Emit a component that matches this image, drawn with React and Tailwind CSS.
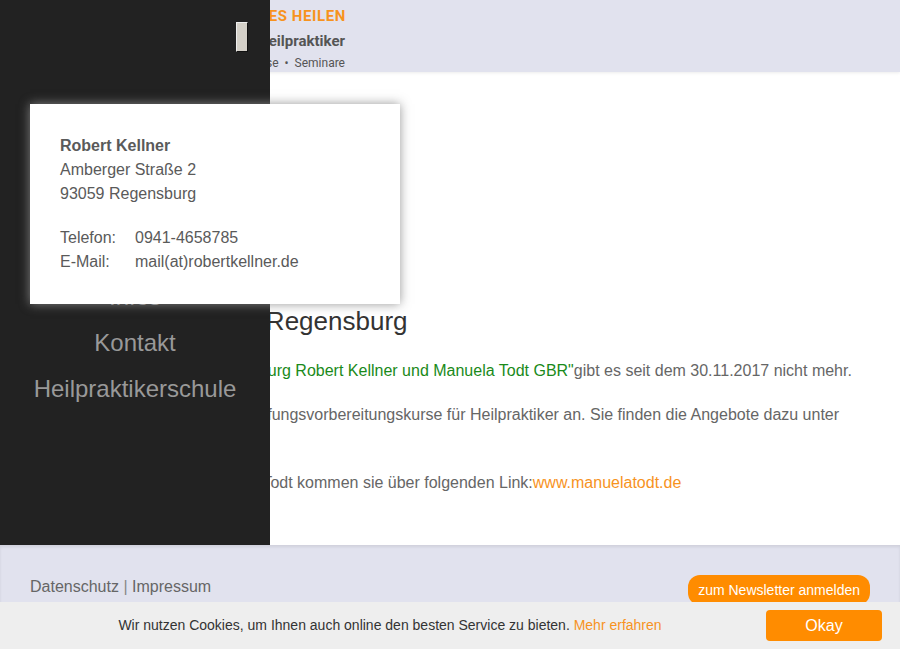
import React from "react";

const menu = [
  "Startseite",
  "Praxis",
  "Therapien",
  "Vorträge & Termine",
  "Infos",
  "Kontakt",
  "Heilpraktikerschule",
];

const App = () => {
  return (
    <div className="relative w-[900px] h-[649px] overflow-hidden bg-white font-['Liberation_Sans',Arial,sans-serif]">
      {/* Header */}
      <header className="h-[72px] bg-[#e1e2ee] shadow-[0_1px_3px_rgba(0,0,0,0.08)] relative z-10">
        <div className="w-[345px] flex flex-col items-end font-['Roboto',sans-serif] pt-[7px]">
          <div className="text-[15px] leading-[18px] font-bold tracking-[0.6px] text-[#f7931e] mr-[-1px]">SANFTES HEILEN</div>
          <div className="text-[15px] leading-[18px] font-bold text-[#555] mt-[7px]">Heilpraktiker</div>
          <div className="text-[12px] leading-[15px] text-[#555] mt-[6px]">Praxis&nbsp; •&nbsp; Kurse&nbsp; •&nbsp; Seminare</div>
        </div>
      </header>

      {/* Main content */}
      <main className="h-[473px] px-[30px] pt-[234px] text-[16px] leading-[24px] text-[#666]">
        <h1 className="text-[26px] leading-[31px] text-[#333] ml-[9px]">Heilpraktikerschule Regensburg</h1>
        <p className="mt-[22px]">
          Die <span className="text-[#1a8a1a]">"Heilpraktikerschule Regensburg Robert Kellner und Manuela Todt GBR"</span>gibt es seit dem 30.11.2017 nicht mehr.
        </p>
        <p className="mt-[20px]">
          Manuela Todt bietet weiterhin Prüfungsvorbereitungskurse für Heilpraktiker an. Sie finden die Angebote dazu unter www.manuelatodt.de
        </p>
        <p className="mt-[20px]">
          Zur Webseite von Frau Manuela Todt kommen sie über folgenden Link:<span className="text-[#f7931e]">www.manuelatodt.de</span>
        </p>
      </main>

      {/* Footer */}
      <footer className="h-[104px] bg-[#e1e2ee] shadow-[inset_0_2px_3px_rgba(0,0,0,0.08)] px-[30px] flex items-start justify-between pt-[30px]">
        <div className="text-[16px] leading-[22px] text-[#666] mt-[1px]">
          Datenschutz <span className="text-[#888]">|</span> Impressum
        </div>
        <button className="bg-[#ff8c00] text-white text-[14px] leading-[18px] px-[10px] py-[6px] rounded-[12px] h-[30px]">
          zum Newsletter anmelden
        </button>
      </footer>

      {/* Cookie bar */}
      <div className="absolute left-0 right-0 bottom-0 h-[47px] bg-[#eeeeee] flex items-center z-30">
        <div className="flex-1 text-center text-[14px] text-[#333] pl-[14px]">
          Wir nutzen Cookies, um Ihnen auch online den besten Service zu bieten. <span className="text-[#f7931e]">Mehr erfahren</span>
        </div>
        <button className="w-[116px] h-[31px] bg-[#ff8c00] text-white text-[16px] rounded-[4px] mr-[18px]">Okay</button>
      </div>

      {/* Sidebar */}
      <nav className="absolute left-0 top-0 w-[270px] h-[545px] bg-[#222222] z-20 pt-[90px]">
        <div className="absolute left-[236px] top-[22px] w-[12px] h-[30px] bg-[#d4d0c8] border border-[#111] border-t-[#eee] border-l-[#eee]" />
        <ul className="flex flex-col">
          {menu.map((m) => (
            <li key={m} className="h-[46px] leading-[46px] text-center text-[24px] text-[#999]">{m}</li>
          ))}
        </ul>
      </nav>

      {/* Contact popup */}
      <div className="absolute left-[30px] top-[104px] w-[370px] h-[200px] bg-white z-40 px-[30px] py-[30px] text-[16px] leading-[24px] text-[#5a5a5a] shadow-[0_0_10px_rgba(140,140,140,0.9)]">
        <p className="font-bold">Robert Kellner</p>
        <p>Amberger Straße 2</p>
        <p>93059 Regensburg</p>
        <div className="mt-[20px] flex">
          <span className="w-[75px]">Telefon:</span>
          <span>0941-4658785</span>
        </div>
        <div className="flex">
          <span className="w-[75px]">E-Mail:</span>
          <span>mail(at)robertkellner.de</span>
        </div>
      </div>
    </div>
  );
};

export default App;
